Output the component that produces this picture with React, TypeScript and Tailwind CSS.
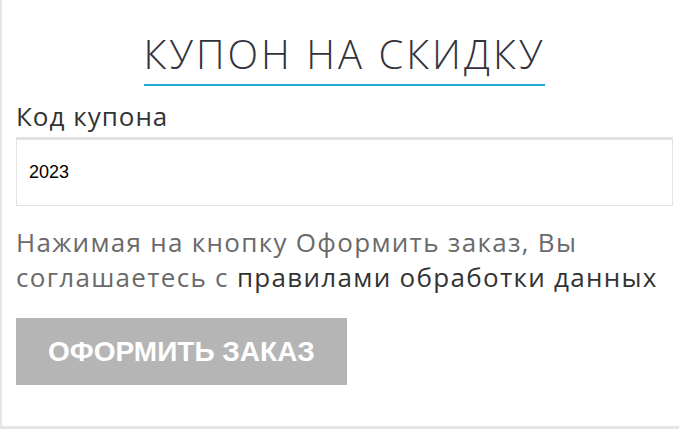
export default function App() {
  return (
    <div className="h-[429px] w-[679px] bg-white" style={{ fontFamily: '"Open Sans", sans-serif' }}>
      <div className="flex h-[429px] flex-col border-b-[3px] border-l-2 border-[#e6e6e6] pl-[14px] pr-[6px] pt-[28px]">
        {/* Heading with accent underline */}
        <div className="flex justify-center">
          <h2 className="border-b-2 border-[#1eaad4] pb-[4px] text-[40px] leading-[52px] font-[350] tracking-[3px] text-[#33333d]">
            КУПОН НА СКИДКУ
          </h2>
        </div>

        <label className="mt-[14px] text-[26px] leading-[32px] tracking-[1px] text-[#333]">Код купона</label>

        <input
          type="text"
          defaultValue="2023"
          className="mt-[5px] h-[69px] w-full border border-t-[3px] border-[#e2e2e2] px-[12px] text-[18px] text-black outline-none"
          style={{ fontFamily: '"Liberation Sans", Arial, sans-serif' }}
        />

        <p className="mt-[19px] text-[26px] leading-[35px] tracking-[1.3px] text-[#6a6a6a]">
          Нажимая на кнопку Оформить заказ, Вы
          <br />
          соглашаетесь с <a className="text-[#333]">правилами обработки данных</a>
        </p>

        <div className="mt-[23px]">
          <button
            className="h-[67px] w-[331px] bg-[#b5b5b5] text-[28px] font-bold uppercase text-white"
            style={{ fontFamily: '"Liberation Sans", Arial, sans-serif' }}
          >
            Оформить заказ
          </button>
        </div>
      </div>
    </div>
  );
}
